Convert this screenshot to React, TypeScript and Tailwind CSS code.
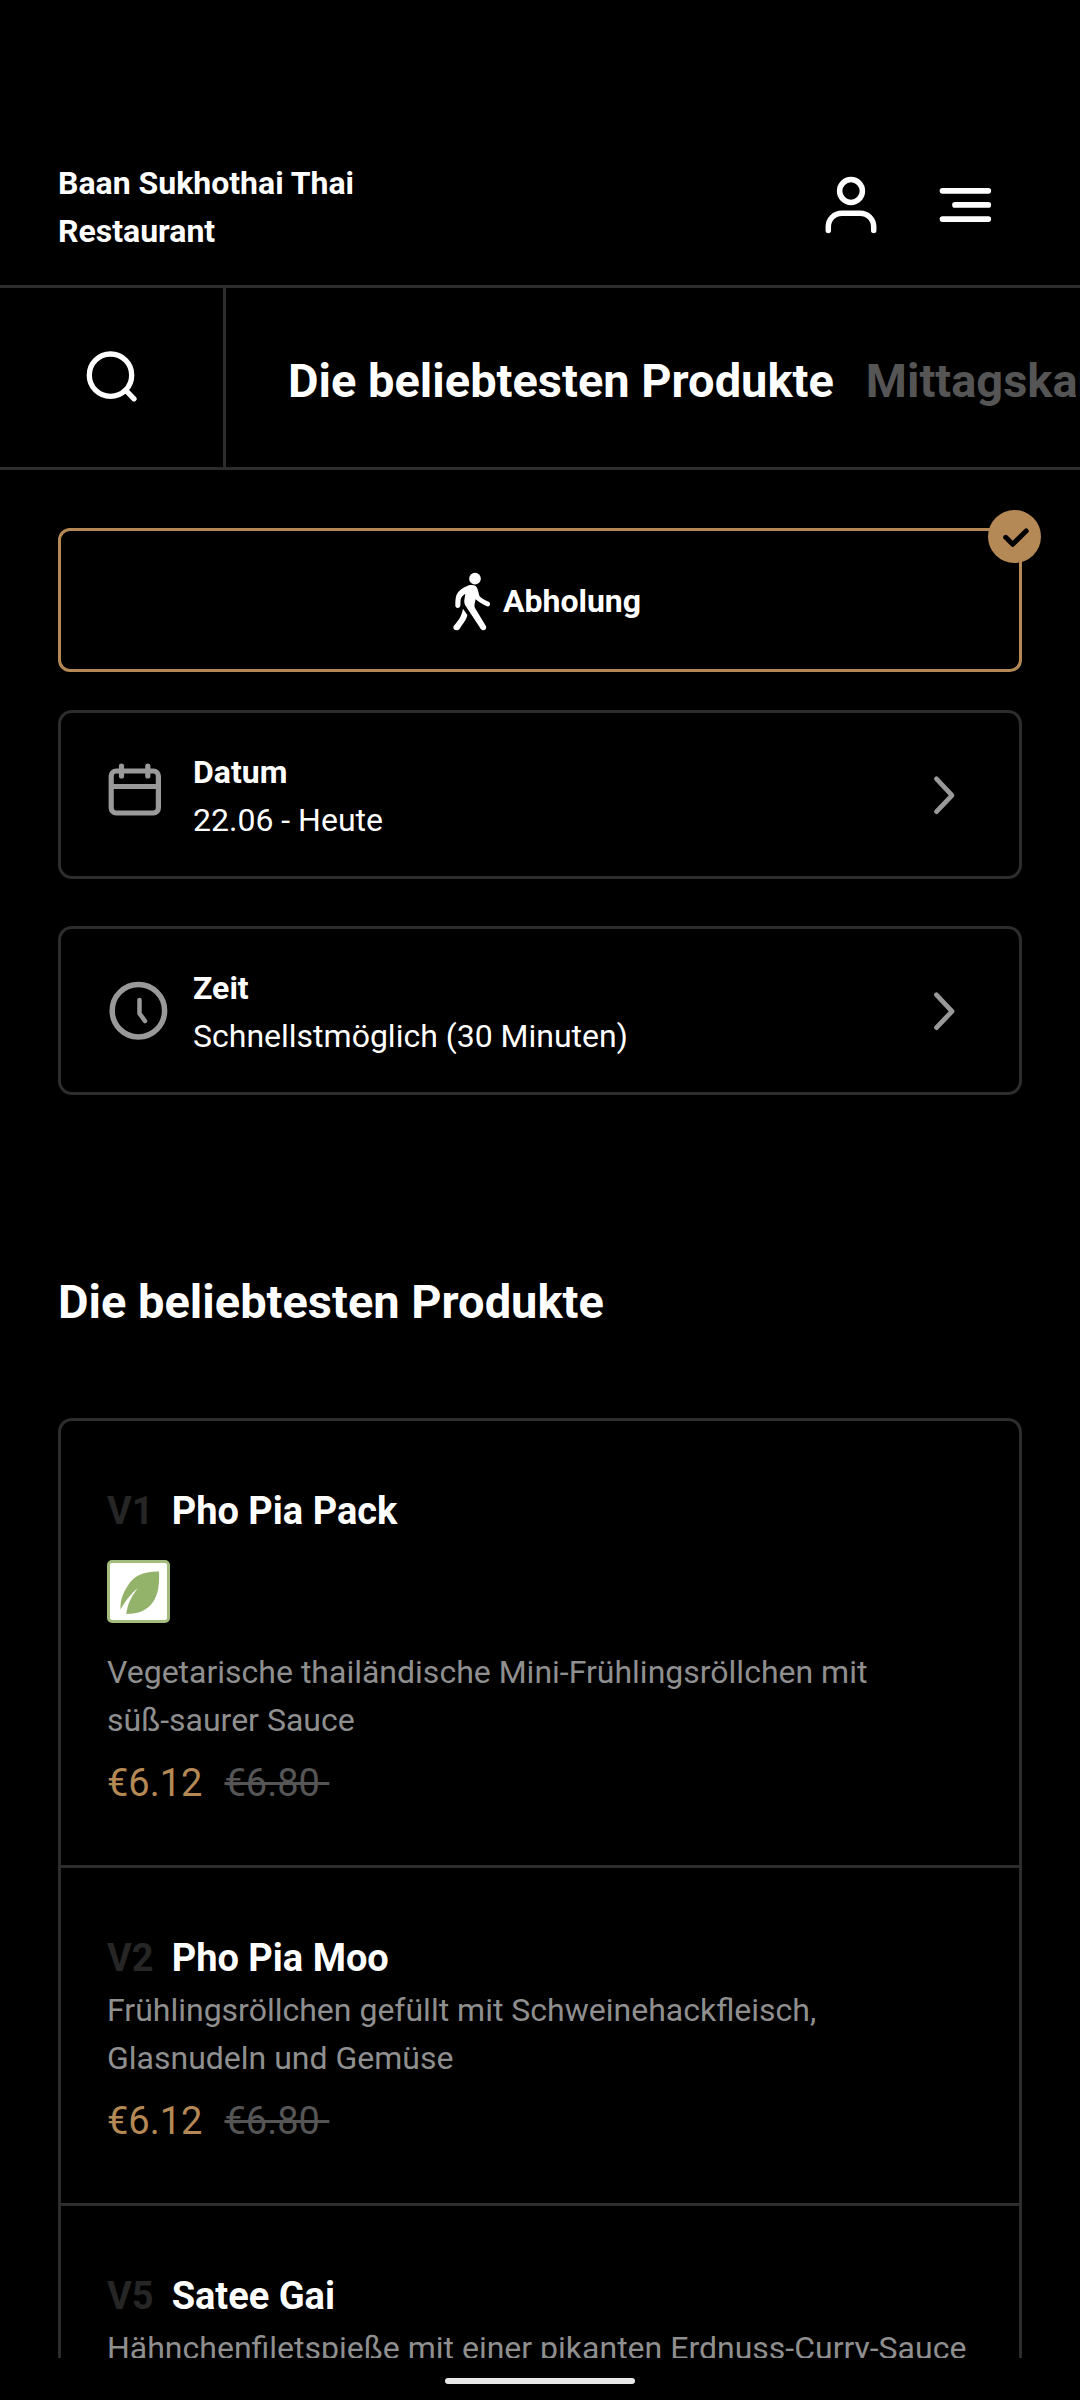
import type { ReactNode } from "react";

type Product = {
  code: string;
  name: string;
  lines: string[];
  price?: string;
  oldPrice?: string;
  vegetarian?: boolean;
};

const products: Product[] = [
  {
    code: "V1",
    name: "Pho Pia Pack",
    lines: ["Vegetarische thailändische Mini-Frühlingsröllchen mit", "süß-saurer Sauce"],
    price: "€6.12",
    oldPrice: "€6.80",
    vegetarian: true,
  },
  {
    code: "V2",
    name: "Pho Pia Moo",
    lines: ["Frühlingsröllchen gefüllt mit Schweinehackfleisch,", "Glasnudeln und Gemüse"],
    price: "€6.12",
    oldPrice: "€6.80",
  },
  {
    code: "V5",
    name: "Satee Gai",
    lines: ["Hähnchenfiletspieße mit einer pikanten Erdnuss-Curry-Sauce"],
  },
];

function UserIcon() {
  return (
    <svg className="size-16" viewBox="0 0 64 64" fill="none" stroke="currentColor" strokeWidth="5.5" strokeLinecap="round" aria-hidden="true">
      <circle cx="32" cy="16" r="11.4" />
      <path d="M9.300 55.500v-3.500c0-8 6-13.700 13.700-13.700h18c7.700 0 13.700 5.700 13.700 13.700v3.500" />
    </svg>
  );
}

function MenuIcon() {
  return (
    <svg className="size-16" viewBox="0 0 64 64" fill="none" stroke="currentColor" strokeWidth="5.7" strokeLinecap="round" aria-hidden="true">
      <path d="M9.500 15.800h45.800M22 29.900h33.300M9.500 44.100h45.800" />
    </svg>
  );
}

function SearchIcon() {
  return (
    <svg className="size-14" viewBox="0 0 56 56" fill="none" stroke="currentColor" strokeWidth="5.3" strokeLinecap="round" aria-hidden="true">
      <circle cx="26.500" cy="25.200" r="21.200" />
      <path d="M42 40.500l8 8.300" />
    </svg>
  );
}

function WalkIcon() {
  return (
    <svg className="h-[59px] w-[38px]" viewBox="20 14 114 177" fill="currentColor" aria-hidden="true">
      <circle cx="86" cy="34" r="17.500" />
      <path d="M72 53C60 55 45 64 36 74C28 84 27 95 27 116C28 124 40 124 42 116L43 96C45 88 50 84 57 79L54 98C53 106 55 112 60 119L103 184C110 193 123 187 119 177L86 122C83 117 85 108 88 96C97 104 109 111 122 117C130 120 135 108 127 103C112 97 103 91 99 85C95 72 95 62 88 56C83 53 78 52 72 53Z" />
      <path d="M50 124L63 143C62 153 52 167 40 184C33 193 17 188 22 176C35 160 45 150 50 124Z" />
    </svg>
  );
}

function CalendarIcon() {
  return (
    <svg className="size-16 shrink-0 text-[#999999]" viewBox="0 0 64 64" fill="none" stroke="currentColor" strokeWidth="5.2" strokeLinecap="round" aria-hidden="true">
      <rect x="5.200" y="8" width="47.200" height="42" rx="5" />
      <path d="M15.500 3v10M41.800 3v10M5.500 23.500h46.500" />
    </svg>
  );
}

function ClockIcon() {
  return (
    <svg className="size-16 shrink-0 text-[#999999]" viewBox="0 0 64 64" fill="none" stroke="currentColor" strokeLinecap="round" strokeLinejoin="round" aria-hidden="true">
      <circle cx="32.400" cy="31.700" r="26.200" strokeWidth="5.500" />
      <path d="M33.500 21v13.500l5.500 7.500" strokeWidth="4.500" />
    </svg>
  );
}

function ChevronIcon() {
  return (
    <svg className="h-11 w-8 shrink-0 text-[#999999]" viewBox="0 0 32 44" fill="none" stroke="currentColor" strokeWidth="4.800" strokeLinecap="round" strokeLinejoin="round" aria-hidden="true">
      <path d="M8.500 5.800L24 22.300L8.500 38.600" />
    </svg>
  );
}

function Leaf() {
  return (
    <svg className="size-full" viewBox="3 3 57 57" role="img" aria-label="Vegetarisch">
      <path
        d="M52 11.500C36 11.300 26 16 20 27C15 34.500 13.200 42 13.500 49.500C17.500 42 23 34.500 30.800 28C24.500 36.500 20.500 44 19.300 54C31 54 40 50.500 46 42C51.500 34 52.500 24 52 11.500Z"
        fill="#94b36a"
      />
    </svg>
  );
}

function PickerCard({ icon, title, value, spaced }: { icon: ReactNode; title: string; value: string; spaced: string }) {
  return (
    <button
      type="button"
      className={`${spaced} flex w-full items-center rounded-[14px] border-3 border-[#2d2d2d] pr-[59px] pl-[45px] text-left`}
    >
      {icon}
      <span className="ml-[23px] flex min-w-0 flex-1 flex-col pt-[35px] pb-8">
        <span className="font-bold">{title}</span>
        <span>{value}</span>
      </span>
      <ChevronIcon />
    </button>
  );
}

function ProductItem({ product }: { product: Product }) {
  return (
    <li className="border-t-3 border-[#2d2d2d] px-[46px] pt-[62px] pb-[54px] first:border-t-0">
      <h3 className="flex gap-[18px] text-[38px] leading-[56px] font-bold">
        <span className="text-[#262626]">{product.code}</span>
        <span>{product.name}</span>
      </h3>
      {product.vegetarian && (
        <div className="mt-[21px] mb-[25px] size-[63px] rounded-[5px] border-3 border-[#a3bb7c] bg-white">
          <Leaf />
        </div>
      )}
      <p className="text-[#8f8f8f]">
        {product.lines.map((line) => (
          <span key={line} className="block">
            {line}
          </span>
        ))}
      </p>
      {product.price && (
        <p className="mt-[11px] flex gap-[22px] text-[38px] leading-[56px]">
          <span className="text-[#b58955]">{product.price}</span>
          <s className="whitespace-pre text-[#555555]">{product.oldPrice}&nbsp;</s>
        </p>
      )}
    </li>
  );
}

export default function App() {
  return (
    <div className="flex h-screen flex-col overflow-hidden bg-black font-[Roboto,sans-serif] text-[32px] leading-[48px] text-white">
      <header className="flex items-center justify-between border-b-3 border-[#2d2d2d] pt-[159px] pr-[83px] pb-[30px] pl-[58px]">
        <h1 className="max-w-[360px] font-bold">Baan Sukhothai Thai Restaurant</h1>
        <div className="flex gap-[50px]">
          <button type="button" aria-label="Konto">
            <UserIcon />
          </button>
          <button type="button" aria-label="Menü">
            <MenuIcon />
          </button>
        </div>
      </header>

      <nav className="flex h-[182px] shrink-0 border-b-3 border-[#2d2d2d]" aria-label="Kategorien">
        <button type="button" aria-label="Suche" className="flex w-[226px] shrink-0 items-center justify-center border-r-3 border-[#2d2d2d]">
          <SearchIcon />
        </button>
        <div className="flex min-w-0 flex-1 items-center gap-8 overflow-hidden pt-1.5 pl-[62px] text-[47px] leading-[72px] font-bold whitespace-nowrap">
          <a href="#beliebt">Die beliebtesten Produkte</a>
          <a href="#mittag" className="text-[#555555]">
            Mittagskarte
          </a>
        </div>
      </nav>

      <main className="min-h-0 flex-1 overflow-y-auto px-[58px] pt-[58px] [scrollbar-width:none]">
        <button
          type="button"
          aria-pressed="true"
          className="relative flex h-36 w-full items-center justify-center gap-3 rounded-[12px] border-3 border-[#b58955] pt-0.5 pl-3.5 font-bold"
        >
          <WalkIcon />
          <span>Abholung</span>
          <span className="absolute -top-[21px] -right-[22px] size-[53px] rounded-full bg-[#b58955]">
            <svg className="size-full" viewBox="0 0 53 53" fill="none" stroke="#000000" strokeWidth="5" strokeLinecap="round" strokeLinejoin="round" aria-hidden="true">
              <path d="M17.700 27.300l7 7l13.500 -13.300" />
            </svg>
          </span>
        </button>

        <PickerCard icon={<CalendarIcon />} title="Datum" value="22.06 - Heute" spaced="mt-[38px]" />
        <PickerCard icon={<ClockIcon />} title="Zeit" value="Schnellstmöglich (30 Minuten)" spaced="mt-[47px]" />

        <section id="beliebt" className="mt-[171px]">
          <h2 className="text-[47px] leading-[72px] font-bold">Die beliebtesten Produkte</h2>
          <ul className="mt-20 rounded-[14px] border-3 border-[#2d2d2d]">
            {products.map((product) => (
              <ProductItem key={product.code} product={product} />
            ))}
          </ul>
        </section>
      </main>

      <footer className="flex h-[42px] shrink-0 items-center justify-center bg-black pt-1">
        <div className="h-[6px] w-[190px] rounded-full bg-[#e8e8e8]" />
      </footer>
    </div>
  );
}
